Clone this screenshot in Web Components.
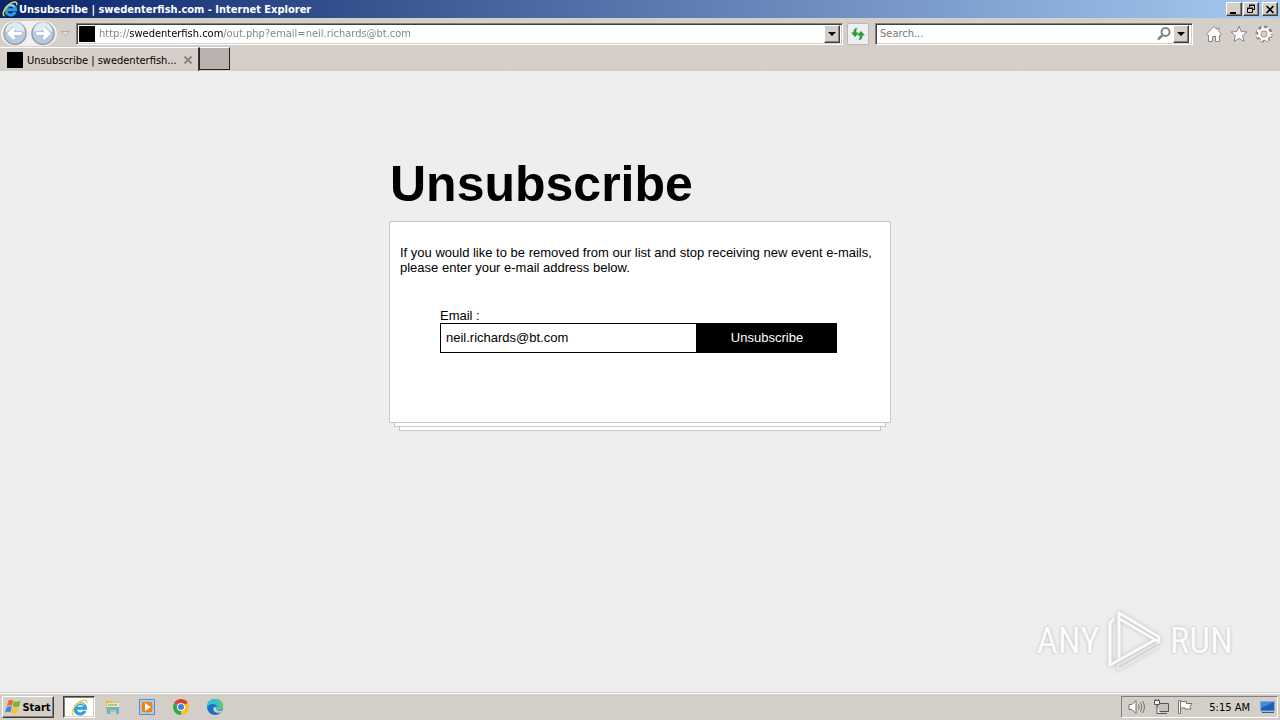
<!DOCTYPE html>
<html lang="en">
<head>
<meta charset="utf-8">
<title>Unsubscribe | swedenterfish.com</title>
<style>
  html, body { margin: 0; }
  body { font-family: "DejaVu Sans Condensed", "Noto Sans", sans-serif; font-size: 11px; color: #000; background: #eee; }
</style>
</head>
<body>
<browser-window>
  <title-bar slot="title">Unsubscribe | swedenterfish.com - Internet Explorer</title-bar>
  <nav-bar slot="nav"></nav-bar>
  <tab-strip slot="tabs">Unsubscribe | swedenterfish...</tab-strip>
  <unsubscribe-page></unsubscribe-page>
  <any-run-mark slot="mark"></any-run-mark>
  <task-bar slot="tasks"></task-bar>
</browser-window>

<script>
const base = `:host,*{box-sizing:border-box} button{font:inherit;color:inherit;margin:0;padding:0;border:0;background:none;display:flex;align-items:center;justify-content:center} svg{display:block;flex:none}`;
const raised = `background:#d4d0c8;border:1px solid;border-color:#fff #404040 #404040 #fff;box-shadow:inset -1px -1px #808080;`;
const ieLogo = s => `<svg width="${s}" height="${s}" viewBox="0 0 16 16" aria-hidden="true">
  <path d="M13.200 11.200A4.900 4.900 0 1 1 13.600 8.700H5" fill="none" stroke="#2f9fe2" stroke-width="3"/>
  <path d="M4.200 6.500A4.900 4.900 0 0 1 12.500 5.800" fill="none" stroke="#9ee0fa" stroke-width="1.200"/>
  <path d="M2.600 15C-.8 13.800 2.500 6.500 7.500 3C11.500.2 16 .2 14.600 4.200" fill="none" stroke="#f0cf4a" stroke-width="1.500"/></svg>`;

function define(name, css, html) {
  customElements.define(name, class extends HTMLElement {
    constructor() {
      super();
      this.attachShadow({ mode: "open" }).innerHTML = `<style>${base}${css}</style>${html}`;
    }
  });
}

define("browser-window", `
  :host{display:flex;flex-direction:column;min-height:100vh;position:relative;background:#eee}
  main{flex:1}
  ::slotted([slot=mark]){position:absolute;right:47px;bottom:47px}
`, `<slot name="title"></slot><slot name="nav"></slot><slot name="tabs"></slot><main><slot></slot></main><slot name="mark"></slot><slot name="tasks"></slot>`);

define("title-bar", `
  :host{display:flex;align-items:center;height:18px;padding:0 2px;gap:1px;color:#fff;font-weight:bold;background:linear-gradient(90deg,#0a246a,#a6caf0)}
  span{flex:1;white-space:nowrap;overflow:hidden}
  button{width:16px;height:14px;${raised}}
  .close{margin-left:2px}
`, `${ieLogo(16)}<span><slot></slot></span>
  <button aria-label="Minimize"><svg width="10" height="9"><path d="M1 7h6v2H1z"/></svg></button>
  <button aria-label="Restore"><svg width="10" height="10" fill="none" stroke="#000"><path d="M3.500 3V1.500h5v4H7M3 1h6M1.500 4.500h5v4h-5zM1 4h6"/></svg></button>
  <button class="close" aria-label="Close"><svg width="10" height="9"><path d="M1.500 1l7 7M8.500 1l-7 7" stroke="#000" stroke-width="1.600"/></svg></button>`);

define("nav-bar", `
  :host{display:flex;align-items:center;height:28px;background:#d6cec8;border-top:3px solid #d2cfc5;padding:0 4px 0 1px}
  .history{display:flex;background:#f2f0ee;border-radius:14px}
  .history button{width:28px;height:25px}
  .recent{width:16px;height:20px;margin-right:3px}
  .field{display:flex;align-items:center;height:22px;background:#fff;border:1px solid;border-color:#808080 #fff #fff #808080;box-shadow:inset 1px 1px #404040,inset -1px -1px #d4d0c8}
  .address{flex:1;min-width:0;padding:1px 2px}
  .site{width:16px;height:16px;background:#000;flex:none}
  input{font:inherit;border:0;outline:0;padding:0;height:18px;min-width:0;background:none;flex:1}
  #url{margin-left:4px;color:transparent;background:linear-gradient(90deg,#808080 31px,#000 31px 124px,#808080 124px);background-clip:text;-webkit-background-clip:text}
  .drop{width:16px;height:18px;${raised}}
  .refresh{width:22px;height:22px;margin:0 6px 0 4px;background:#edf0f3;border:1px solid #bbb7b3;border-radius:2px}
  .search{width:25%;max-width:318px;padding:1px 3px 1px 4px}
  .search button:not(.drop){width:18px;height:18px}
  ::placeholder{color:#777;opacity:1}
  .tools{display:flex;margin-left:9px;gap:1px}
  .tools button{width:24px;height:24px}
`, `
  <div class="history">
    <button aria-label="Back"><svg width="27" height="25" viewBox="0 0 27 26"><circle cx="13" cy="13" r="11.500" fill="#b5cbdf" stroke="#9a9fa6" stroke-width="1.500"/><path d="M3 11a10 10 0 0 1 20 0z" fill="#e0ebf5"/><path d="M20 13H8M12.500 7.500L7 13l5.500 5.500" fill="none" stroke="#9bb0c6" stroke-width="5"/><path d="M20 13H8M12.500 7.500L7 13l5.500 5.500" fill="none" stroke="#fff" stroke-width="3.600"/></svg></button>
    <button aria-label="Forward"><svg width="27" height="25" viewBox="0 0 27 26"><circle cx="13" cy="13" r="11.500" fill="#b5cbdf" stroke="#9a9fa6" stroke-width="1.500"/><path d="M3 11a10 10 0 0 1 20 0z" fill="#e0ebf5"/><path d="M6 13h12M13.500 7.500L19 13l-5.500 5.500" fill="none" stroke="#9bb0c6" stroke-width="5"/><path d="M6 13h12M13.500 7.500L19 13l-5.500 5.500" fill="none" stroke="#fff" stroke-width="3.600"/></svg></button>
  </div>
  <button class="recent" aria-label="Recent pages"><svg width="9" height="6"><path d="M.5.5h8l-4 4.500z" fill="#e4dfdb" stroke="#b0aaa6"/></svg></button>
  <div class="field address"><i class="site"></i><input id="url" aria-label="Address" value="http://swedenterfish.com/out.php?email=neil.richards@bt.com"><button class="drop" aria-label="Show address list"><svg width="8" height="4"><path d="M0 0h8L4 4z"/></svg></button></div>
  <button class="refresh" aria-label="Refresh"><svg width="16" height="16" viewBox="0 0 16 16" fill="#2c9a38"><path d="M7.500 2C4.500 2 3.500 3.500 3.500 6.500H1l4 4.500 4-4.500H6.300c0-2 0-3 1.200-4.500z"/><path d="M8.500 14c3 0 4-1.500 4-4.500H15L11 5 7 9.500h2.700c0 2 0 3-1.200 4.500z"/></svg></button>
  <div class="field search"><input id="find" aria-label="Search" placeholder="Search..."><button aria-label="Search"><svg width="16" height="16" fill="none" stroke="#858585"><circle cx="9.500" cy="6" r="4" stroke-width="2"/><path d="M6.500 9L2 13.500" stroke-width="2.500"/></svg></button><button class="drop" aria-label="Search options"><svg width="8" height="4"><path d="M0 0h8L4 4z"/></svg></button></div>
  <div class="tools">
    <button aria-label="Home"><svg width="18" height="18" viewBox="0 0 18 18" fill="#fff" stroke="#8b8583"><path d="M9 1.500L1.500 9 3 10.500l.5-.5v6.500H7.500v-5h3v5h4V10l.5.500L16.500 9 14 6.500V3h-2v1.500z"/></svg></button>
    <button aria-label="Favorites"><svg width="18" height="18" viewBox="0 0 18 18" fill="#fff" stroke="#8b8583"><path d="M9 1.200l2.200 5.300 5.800.5-4.400 3.700 1.400 5.800-5-3.100-5 3.100 1.400-5.800L1 7l5.800-.5z"/></svg></button>
    <button aria-label="Tools"><svg width="18" height="18" viewBox="0 0 18 18" fill="none"><circle cx="9" cy="9" r="6.800" stroke="#8b8583" stroke-width="3.500" stroke-dasharray="3.340 2"/><circle cx="9" cy="9" r="4.800" stroke="#8b8583" stroke-width="4.200"/><circle cx="9" cy="9" r="6.500" stroke="#fff" stroke-width="2.500" stroke-dasharray="2.100 3.240" stroke-dashoffset="-.6"/><circle cx="9" cy="9" r="4.700" stroke="#fff" stroke-width="2.600"/></svg></button>
  </div>`);

define("tab-strip", `
  :host{display:flex;align-items:flex-start;height:25px;padding:1px 0 0;background:linear-gradient(#d6cec9,#d6cec9 70%,#d2cec7)}
  .tab{display:flex;align-items:center;width:199px;height:24px;padding:1px 4px 0 7px;border-top:1px solid #fff;border-right:1px solid #404040}
  i{width:16px;height:16px;background:#000;margin-right:4px;flex:none}
  span{flex:1;white-space:nowrap}
  .tab button{width:12px;height:12px}
  .new{width:31px;height:23px;background:#bab2ae;border:1px solid;border-color:#fff #202020 #202020 #202020}
`, `<div class="tab"><i></i><span><slot></slot></span><button aria-label="Close tab"><svg width="8" height="8"><path d="M.5.5l7 7M7.500.5l-7 7" stroke="#8c8581" stroke-width="2"/></svg></button></div><button class="new" aria-label="New tab"></button>`);

define("unsubscribe-page", `
  :host{display:block;max-width:502px;margin:0 auto;padding-top:84px;font:13px/15px "Liberation Sans",Arial,sans-serif}
  h1{font-size:50px;line-height:58px;margin:0 0 8px 1px}
  .card{height:202px;padding:23px 10px;background:#fff;border:1px solid #c8c8c8;border-radius:2px}
  .sheet{height:4px;margin:0 5px;background:#fff;border:1px solid #c8c8c8;border-top:0}
  .sheet+.sheet{margin:0 10px}
  p{margin:0 0 33px}
  form{margin:0 43px 0 40px}
  label{display:block}
  .row{display:flex}
  input{flex:1;min-width:0;height:30px;font:inherit;padding:0 5px 1px;border:1px solid #000;border-radius:0;outline:0;background:#fff}
  .row button{width:140px;height:30px;padding-bottom:1px;background:#000;color:#fff}
`, `<h1>Unsubscribe</h1>
  <div class="card"><p>If you would like to be removed from our list and stop receiving new event e-mails, please enter your e-mail address below.</p>
  <form onsubmit="return false"><label for="email">Email :</label><div class="row"><input id="email" type="text" value="neil.richards@bt.com"><button type="submit">Unsubscribe</button></div></form></div>
  <div class="sheet"></div><div class="sheet"></div>`);

define("any-run-mark", `
  :host{display:flex;align-items:center;gap:6px;font:37px/62px "Roboto Condensed","Roboto",sans-serif;color:#fbfbfb;text-shadow:0 0 3px #b4b4b4;pointer-events:none}
  svg{filter:drop-shadow(0 0 2px #b8b8b8)}
`, `<span>ANY</span><svg width="58" height="64" viewBox="0 0 58 64" fill="none" stroke="#fafafa" stroke-width="3" stroke-linejoin="round"><path d="M13 50V4l40 24v5L14 10"/><path d="M8 10L4 14v42l45-25"/><path d="M53 33L12 56v5l41-24" stroke="#e9e9e9" stroke-width="2"/></svg><span>RUN</span>`);

define("task-bar", `
  :host{display:flex;align-items:center;height:28px;padding:2px 2px 1px;background:#d4cec8;border-top:1px solid #d4d0c8;box-shadow:inset 0 1px #fff}
  .start{width:52px;height:22px;gap:1px;font-weight:bold;${raised}}
  nav{display:flex;align-items:center;flex:1;gap:2px;margin-left:9px}
  nav button{width:32px;height:22px}
  nav .on{background:#fff;border:1px solid;border-color:#404040 #fff #fff #404040;box-shadow:inset 1px 1px #808080,inset -1px -1px #d4d0c8}
  .tray{display:flex;align-items:center;gap:8px;height:22px;padding:0 1px 0 6px;border:1px solid;border-color:#808080 #fff #fff #808080}
  time{margin:0 1px 0 8px}
`, `
  <button class="start"><svg width="16" height="16" viewBox="0 0 16 16"><path d="M3.500 1.500Q6 0 8.200 1.500L7 7Q4.500 5.700 2 7z" fill="#ec6a2c"/><path d="M9 2q2.500 1.500 6.500 0L14 7.500Q10.500 8.800 7.800 7.500z" fill="#76b82a"/><path d="M1.800 8Q4.500 6.500 6.800 8L5.300 13.500Q3 12 0 13.500z" fill="#3a88d8"/><path d="M7.500 8.500q2.500 1.500 6.200 0l-1.500 5.500Q9 15.500 6 14z" fill="#fbc22d"/></svg>Start</button>
  <nav aria-label="Taskbar">
    <button class="on" aria-label="Internet Explorer">${ieLogo(17)}</button>
    <button aria-label="File Explorer"><svg width="16" height="16" viewBox="0 0 16 16"><path d="M1 2h5l1 1.500h7V13H1z" fill="#dfb951"/><path d="M2 4h12v8H2z" fill="#f9eaa2"/><path d="M2 8h12v7h-3v-3.500H5.500V15H2z" fill="#69b4d4"/><path d="M3 6h9" stroke="#6aa867"/></svg></button>
    <button aria-label="Media Player"><svg width="16" height="16" viewBox="0 0 16 16"><path d="M.5.5h15v15H.5z" fill="#a9cfea" stroke="#5c8fb8"/><path d="M3 3h10v10H3z" fill="#f08018"/><circle cx="8" cy="8" r="5.600" fill="#f08018"/><path d="M6 4v8l6-4z" fill="#fff"/></svg></button>
    <button aria-label="Chrome"><svg width="16" height="16" viewBox="0 0 16 16"><path d="M8 8L1.100 4A8 8 0 0 1 14.900 4z" fill="#e33b2e"/><path d="M8 8l6.900-4A8 8 0 0 1 8 16z" fill="#fbc116"/><path d="M8 8v8A8 8 0 0 1 1.100 4z" fill="#2da94f"/><circle cx="8" cy="8" r="4" fill="#fff"/><circle cx="8" cy="8" r="3" fill="#3b7ded"/></svg></button>
    <button aria-label="Edge"><svg width="16" height="16" viewBox="0 0 16 16"><circle cx="8" cy="8" r="8" fill="#1572c4"/><path d="M0 8A8 8 0 0 1 16 7c0 3-2 4-5 4-2 0-1-1-1-2.500C10 4 3 4 0 8z" fill="#38bfd0"/><path d="M9 .1A8 8 0 0 1 16 7c0 3-2 4-5 4C13 8 13 3 9 .1z" fill="#55cf78"/><path d="M7 8c-2 3 1 7 7 5.500L15 11c-3 1.500-7 .5-5-2.500z" fill="#d4cec8"/></svg></button>
  </nav>
  <div class="tray">
    <svg width="17" height="16" viewBox="0 0 17 16" fill="#fff" stroke="#77716d"><path d="M1 5.500h3l4-4v13l-4-4H1z"/><path d="M10.500 5.500q1.500 2.500 0 5M12.500 3.500q3 4.500 0 9M14.500 2q4 6 0 12" fill="none"/></svg>
    <svg width="16" height="16" viewBox="0 0 16 16" fill="#fff" stroke="#595450"><path d="M4.500 4.500h11v8h-11z" fill="#c4c1be"/><path d="M7 14.500h7M1.500 1.500h5v4h-5zM2.500 0v2M5.500 0v2M4 6v8.500h3"/></svg>
    <svg width="16" height="16" viewBox="0 0 16 16" fill="#fff" stroke="#77716d"><path d="M1.500 1.500h2v13h-2zM3.500 2.500h6v2h5.500l-2 3 1 2.500H8V9H3.500z"/></svg>
    <time>5:15 AM</time>
    <svg width="17" height="14" viewBox="0 0 17 14"><path d="M1.500 1.500h14v9.500h-14z" fill="#1860bb" stroke="#90aac9"/><path d="M2 2h13L2 8z" fill="#3e8ce0"/><path d="M3 12.500h12" stroke="#335b8c"/></svg>
  </div>`);
</script>
</body>
</html>
